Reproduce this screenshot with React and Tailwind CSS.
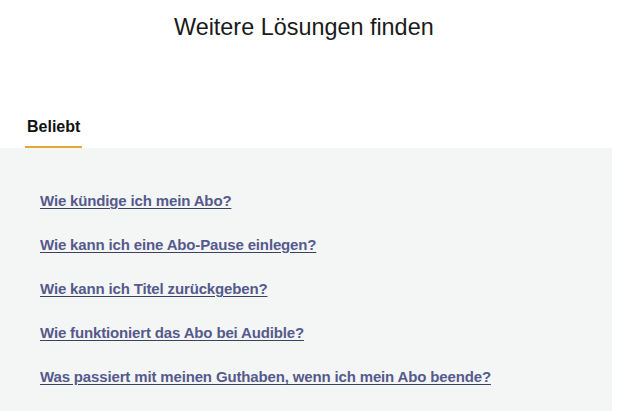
const questions = [
  "Wie kündige ich mein Abo?",
  "Wie kann ich eine Abo-Pause einlegen?",
  "Wie kann ich Titel zurückgeben?",
  "Wie funktioniert das Abo bei Audible?",
  "Was passiert mit meinen Guthaben, wenn ich mein Abo beende?",
];

export default function App() {
  return (
    <div className="h-[411px] w-[620px] overflow-hidden bg-white font-['Liberation_Sans',sans-serif]">
      <h1 className="pt-[13px] pl-[174px] text-[23.4px] leading-7 text-[#1a1a1a]">
        Weitere Lösungen finden
      </h1>

      {/* tab strip */}
      <div className="mt-[76px] flex pl-[25px]">
        <div className="border-b-2 border-[#e3a73a] px-[2px] pb-[9px] text-[16px] leading-5 font-bold text-[#111]">
          Beliebt
        </div>
      </div>

      <div className="mr-[8px] h-full bg-[#f4f5f5] pt-[43px] pl-[40px]">
        <ul className="flex flex-col gap-[24px]">
          {questions.map((q) => (
            <li key={q} className="leading-5">
              <a
                href="#"
                className="text-[15px] font-bold tracking-[-0.15px] text-[#555a8c] underline decoration-[#3f4160] underline-offset-2"
              >
                {q}
              </a>
            </li>
          ))}
        </ul>
      </div>
    </div>
  );
}
